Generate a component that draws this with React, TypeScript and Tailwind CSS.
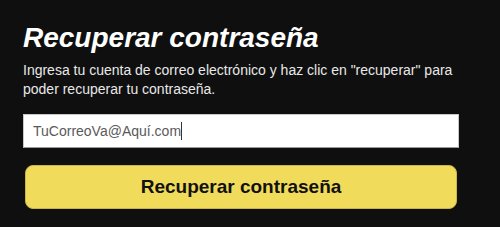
export default function App() {
  return (
    <div className="w-[500px] h-[227px] bg-[#0f0f0f] font-['Liberation_Sans',Arial,sans-serif] overflow-hidden">
      <div className="w-[436px] ml-[23px] pt-[22px]">
        <h1 className="text-[28px] leading-[32px] font-bold italic text-white">Recuperar contraseña</h1>
        <p className="mt-[7px] text-[14px] leading-[19px] text-[#e8e8e8]">
          Ingresa tu cuenta de correo electrónico y haz clic en "recuperar" para poder recuperar tu contraseña.
        </p>
        <div className="mt-[15px] h-[34px] bg-white border border-[#c8c8c8] border-b-[#9a9a9a] flex items-center px-[9px]">
          <span className="text-[14px] text-[#5a5a5a]">TuCorreoVa@Aquí.com</span>
          <span className="inline-block w-px h-[18px] bg-[#333]" />
        </div>
        <button className="mt-[17px] ml-[2px] w-[432px] h-[44px] rounded-[8px] bg-[#f0db5b] border border-[#c9b64a] text-[19px] font-bold text-[#111] flex items-center justify-center">
          Recuperar contraseña
        </button>
      </div>
    </div>
  )
}
